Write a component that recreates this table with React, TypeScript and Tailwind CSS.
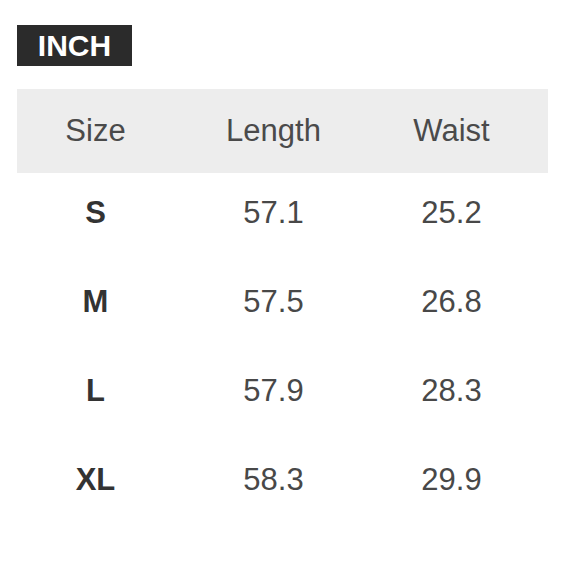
import React from 'react'

const rows = [
  { size: 'S', length: '57.1', waist: '25.2' },
  { size: 'M', length: '57.5', waist: '26.8' },
  { size: 'L', length: '57.9', waist: '28.3' },
  { size: 'XL', length: '58.3', waist: '29.9' },
]

const App = () => {
  return (
    <div className="w-[580px] h-[580px] bg-white pl-[17px] pt-[25px] font-['Liberation_Sans',Arial,sans-serif]">
      <div className="w-[115px] h-[41px] bg-[#2b2b2b] text-white text-[30px] font-bold leading-none flex items-center justify-center">
        INCH
      </div>
      <div className="w-[531px] mt-[23px]">
        <div className="grid grid-cols-[157px_199px_157px_1fr] h-[84px] bg-[#ededed] items-center text-center text-[31px] text-[#4a4a4a]">
          <span>Size</span>
          <span>Length</span>
          <span>Waist</span>
          <span></span>
        </div>
        {rows.map((r) => (
          <div key={r.size} className="grid grid-cols-[157px_199px_157px_1fr] h-[89px] pb-[8px] items-center text-center text-[31px] text-[#484848]">
            <span className="font-bold text-[#333]">{r.size}</span>
            <span>{r.length}</span>
            <span>{r.waist}</span>
            <span></span>
          </div>
        ))}
      </div>
    </div>
  )
}

export default App
